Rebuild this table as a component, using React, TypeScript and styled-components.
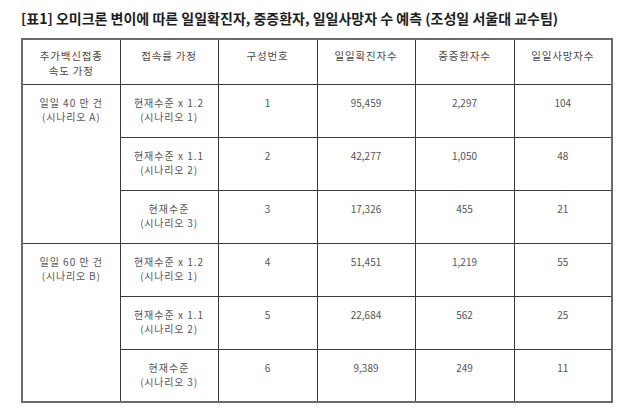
import React from 'react';
import styled, { createGlobalStyle } from 'styled-components';

interface Scenario {
  label: string;
  sub: string;
  rows: {
    rate: string;
    rateSub: string;
    no: string;
    cases: string;
    severe: string;
    deaths: string;
  }[];
}

const scenarios: Scenario[] = [
  {
    label: '일일 40 만 건',
    sub: '(시나리오 A)',
    rows: [
      { rate: '현재수준 x 1.2', rateSub: '(시나리오 1)', no: '1', cases: '95,459', severe: '2,297', deaths: '104' },
      { rate: '현재수준 x 1.1', rateSub: '(시나리오 2)', no: '2', cases: '42,277', severe: '1,050', deaths: '48' },
      { rate: '현재수준', rateSub: '(시나리오 3)', no: '3', cases: '17,326', severe: '455', deaths: '21' },
    ],
  },
  {
    label: '일일 60 만 건',
    sub: '(시나리오 B)',
    rows: [
      { rate: '현재수준 x 1.2', rateSub: '(시나리오 1)', no: '4', cases: '51,451', severe: '1,219', deaths: '55' },
      { rate: '현재수준 x 1.1', rateSub: '(시나리오 2)', no: '5', cases: '22,684', severe: '562', deaths: '25' },
      { rate: '현재수준', rateSub: '(시나리오 3)', no: '6', cases: '9,389', severe: '249', deaths: '11' },
    ],
  },
];

const headers = [
  ['추가백신접종', '속도 가정'],
  ['접속률 가정'],
  ['구성번호'],
  ['일일확진자수'],
  ['중증환자수'],
  ['일일사망자수'],
];

const App: React.FC = () => {
  return (
    <Page>
      <GlobalStyle />
      <Title>[표1] 오미크론 변이에 따른 일일확진자, 중증환자, 일일사망자 수 예측 (조성일 서울대 교수팀)</Title>
      <Table>
        <colgroup>
          {headers.map((_, i) => (
            <col key={i} style={{ width: i === 2 || i === 4 ? 99 : 98 }} />
          ))}
        </colgroup>
        <thead>
          <tr>
            {headers.map((lines, i) => (
              <HeadCell key={i}>
                {lines.map((line) => (
                  <Line key={line}>{line}</Line>
                ))}
              </HeadCell>
            ))}
          </tr>
        </thead>
        <tbody>
          {scenarios.map((scenario) =>
            scenario.rows.map((row, j) => (
              <tr key={row.no}>
                {j === 0 && (
                  <Cell rowSpan={scenario.rows.length}>
                    <Line $spaced>{scenario.label}</Line>
                    <Line>{scenario.sub}</Line>
                  </Cell>
                )}
                <Cell>
                  <Line $spaced>{row.rate}</Line>
                  <Line>{row.rateSub}</Line>
                </Cell>
                <Cell>{row.no}</Cell>
                <Cell>{row.cases}</Cell>
                <Cell>{row.severe}</Cell>
                <Cell>{row.deaths}</Cell>
              </tr>
            ))
          )}
        </tbody>
      </Table>
    </Page>
  );
};

const GlobalStyle = createGlobalStyle`
  body {
    margin: 0;
    background: #fff;
  }
`;

const Page = styled.div`
  width: 628px;
  height: 413px;
  padding: 9px 0 0 21px;
  box-sizing: border-box;
  font-family: 'Noto Sans CJK KR', 'Noto Sans', sans-serif;
  overflow: hidden;
`;

const Title = styled.h1`
  margin: 0 0 10px;
  font-size: 14px;
  line-height: 19px;
  font-weight: 700;
  color: #1e1e1e;
  letter-spacing: 0;
  white-space: nowrap;
`;

const Table = styled.table`
  width: 592px;
  table-layout: fixed;
  border-collapse: collapse;
  border: 2px solid #6a6a6a;
  color: #555;
  font-size: 10px;
`;

const HeadCell = styled.th`
  height: 45px;
  padding: 8px 2px 0;
  box-sizing: border-box;
  vertical-align: top;
  font-weight: 400;
  line-height: 15px;
  font-size: 10.5px;
  border: 1px solid #3a3a3a;
  letter-spacing: 1.6px;
  color: #4a4a4a;
`;

const Cell = styled.td`
  height: 53px;
  padding: 11px 2px 0;
  box-sizing: border-box;
  vertical-align: top;
  text-align: center;
  line-height: 14.5px;
  border: 1px solid #3a3a3a;
`;

const Line = styled.div<{ $spaced?: boolean }>`
  white-space: nowrap;
  letter-spacing: ${(p) => (p.$spaced ? '1px' : '0.8px')};
`;

export default App;
